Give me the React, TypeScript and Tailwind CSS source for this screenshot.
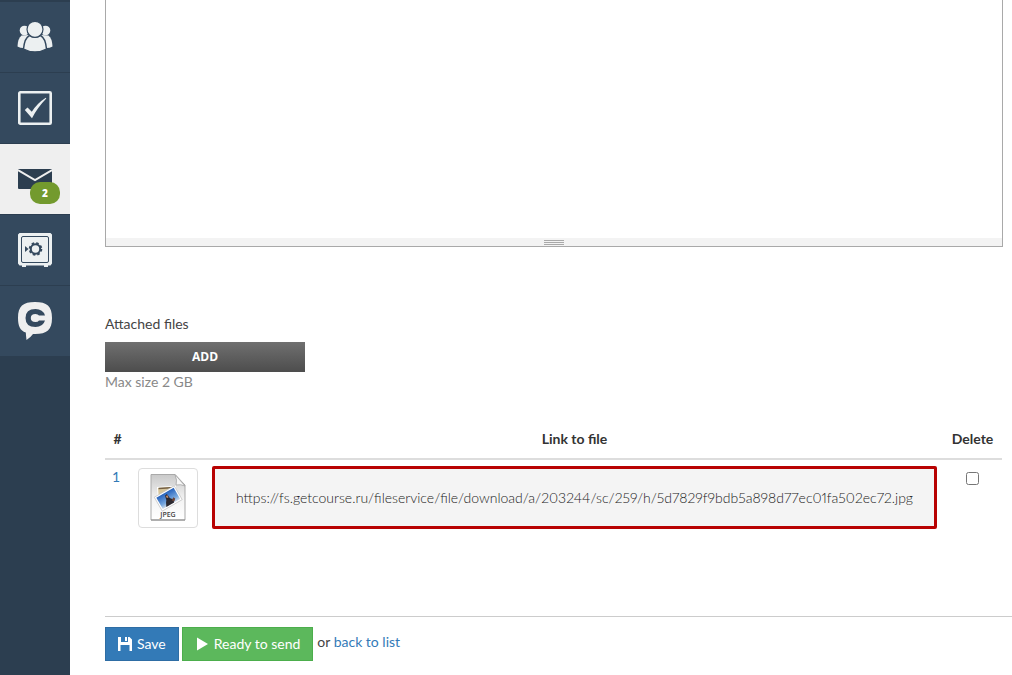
import type { ReactNode } from 'react';

interface NavItem {
  label: string;
  icon: ReactNode;
  active?: boolean;
  badge?: number;
}

interface AttachedFile {
  id: number;
  url: string;
}

const UsersIcon = () => (
  <svg width="36" height="32" viewBox="0 0 36 32" fill="#ecf0f1">
    <circle cx="7.5" cy="9.5" r="4.8" />
    <circle cx="28.5" cy="9.5" r="4.8" />
    <path d="M4.5 14.5 Q1 17 0.5 25.5 Q4 27.5 8 27 L12 14 Z" />
    <path d="M31.5 14.5 Q35 17 35.5 25.5 Q32 27.5 28 27 L24 14 Z" />
    <path
      d="M12.5 14.5 Q18 18 23.5 14.5 Q28.5 17 29.5 28 Q24 31 18 31 Q12 31 6.5 28 Q7.5 17 12.5 14.5 Z"
      stroke="#34495e"
      strokeWidth="1.4"
    />
    <circle cx="18" cy="8.3" r="8" stroke="#34495e" strokeWidth="1.2" />
  </svg>
);

const TaskIcon = () => (
  <svg width="34" height="34" viewBox="0 0 34 34">
    <rect x="1.3" y="1.3" width="31.4" height="31.4" rx="1" fill="none" stroke="#ecf0f1" strokeWidth="2.6" />
    <path d="M6.8 19 L9.5 16.6 L13.8 20.8 Q19.5 12 27.8 6.8 L28.3 7.6 Q20 16 14 27.2 Z" fill="#ecf0f1" />
  </svg>
);

const MailIcon = () => (
  <svg width="34" height="20" viewBox="0 0 34 20">
    <rect width="34" height="20" rx="1" fill="#2c3e50" />
    <path d="M0 1 L17 11 L34 1" fill="none" stroke="#efefef" strokeWidth="2" />
  </svg>
);

const SafeIcon = () => (
  <svg width="34" height="34" viewBox="0 0 34 34">
    <path d="M1.5 0 H32.5 L34 1.5 V30.5 L32.5 32.5 H30 V34 H26 V32.5 H8 V34 H4 V32.5 H1.5 L0 30.5 V1.5 Z" fill="#ecf0f1" />
    <rect x="3.5" y="3.5" width="27" height="26" rx="1.5" fill="none" stroke="#34495e" />
    <path d="M7 13 L10.5 16 L7 19 Z" fill="#34495e" />
    <circle cx="17.5" cy="16" r="4.7" fill="none" stroke="#34495e" strokeWidth="2" />
    <circle cx="17.5" cy="16" r="5.8" fill="none" stroke="#34495e" strokeWidth="2" strokeDasharray="2.55 2" />
  </svg>
);

const ChatIcon = () => (
  <svg width="34" height="38" viewBox="0 0 34 38">
    <path
      d="M17 0 C29 0 34 4 34 16 C34 28 29 32 17 32 L15 32 Q12.5 35.5 8.5 38 Q8 34 7.8 30.5 C2 28.5 0 24 0 16 C0 4 5 0 17 0 Z"
      fill="#efefef"
    />
    <path
      d="M27 13.5 H21 Q20 12 17.5 12 Q12.8 12 12.8 16 Q12.8 20 17.5 20 Q20 20 21 18.5 H27 Q25 25 17.5 25 Q7.5 25 7.5 16 Q7.5 7 17.5 7 Q25 7 27 13.5 Z"
      fill="#34495e"
    />
  </svg>
);

const JpegIcon = () => (
  <svg width="48" height="48" viewBox="0 0 48 48">
    <defs>
      <linearGradient id="page" x1="0" y1="0" x2="0" y2="1">
        <stop offset="0" stopColor="#c9c9c9" />
        <stop offset="0.55" stopColor="#f4f4f4" />
        <stop offset="1" stopColor="#fff" />
      </linearGradient>
      <linearGradient id="sky" x1="0" y1="0" x2="0" y2="1">
        <stop offset="0" stopColor="#2763bd" />
        <stop offset="0.7" stopColor="#79a9df" />
        <stop offset="1" stopColor="#d2dce8" />
      </linearGradient>
    </defs>
    <path d="M7 0.5 H31 L41 11 V46 H7 Z" fill="url(#page)" stroke="#a9a9a9" />
    <path d="M7 46 H41" stroke="#8a8a8a" />
    <path d="M31 0.5 Q33.5 6.5 32 11 Q37 10 41 12 Z" fill="#f7f7f7" stroke="#a5a5a5" strokeWidth="0.8" />
    <g transform="rotate(-4 22 20)">
      <rect x="14" y="13" width="18" height="13" fill="#d6c59b" stroke="#fff" />
      <path d="M15 14 H31" stroke="#745f43" strokeWidth="1.5" />
    </g>
    <g transform="rotate(-30 24 24)">
      <rect x="12.5" y="16.5" width="23" height="16" fill="#fff" stroke="#bbb" strokeWidth="0.6" />
      <rect x="14" y="18" width="20" height="13" fill="url(#sky)" />
      <path d="M18 31 L20 27 L21.5 25 L22.5 20.5 L25 20 L25.5 25 L28 28 L27 31 Z" fill="#2c2930" />
      <path d="M23 21 L25 21.5 L24.5 24 L23 23.5 Z" fill="#b98568" />
      <path d="M26 28 L29 26 L30 28 L28 30 Z" fill="#6e4436" />
    </g>
    <text x="24" y="43" textAnchor="middle" fontFamily="Open Sans, sans-serif" fontSize="7" fontWeight="600" fill="#444">
      JPEG
    </text>
  </svg>
);

const SaveIcon = () => (
  <svg width="14" height="14" viewBox="0 0 14 14" fill="#fff">
    <path d="M0 0 H3 V5 H10 V0 H11.5 L14 2.5 V14 H11.5 V8 H2.5 V14 H0 Z" />
    <rect x="7" y="0" width="2" height="4" />
  </svg>
);

const navItems: NavItem[] = [
  { label: 'Users', icon: <UsersIcon /> },
  { label: 'Tasks', icon: <TaskIcon /> },
  { label: 'Messages', icon: <MailIcon />, active: true, badge: 2 },
  { label: 'Sales', icon: <SafeIcon /> },
  { label: 'Chat', icon: <ChatIcon /> },
];

const files: AttachedFile[] = [
  {
    id: 1,
    url: 'https://fs.getcourse.ru/fileservice/file/download/a/203244/sc/259/h/5d7829f9bdb5a898d77ec01fa502ec72.jpg',
  },
];

function Sidebar() {
  return (
    <nav className="w-[70px] shrink-0 bg-[#2c3e50] pt-px">
      {navItems.map((item) => (
        <a
          key={item.label}
          href="#"
          aria-label={item.label}
          className={`relative flex h-[71px] items-center justify-center border-t border-[#2c3e50] ${
            item.active ? 'bg-[#efefef]' : 'bg-[#34495e]'
          }`}
        >
          {item.icon}
          {item.badge && (
            <span className="absolute right-[10px] bottom-[10px] flex h-[22px] w-[30px] items-center justify-center rounded-[10px] bg-[#739a2e] font-['Open_Sans',sans-serif] text-[10px] font-extrabold text-white">
              {item.badge}
            </span>
          )}
        </a>
      ))}
    </nav>
  );
}

function Editor() {
  return (
    <div className="border border-t-0 border-[#a9a9a9]">
      <textarea aria-label="Message" className="block h-[238px] w-full resize-none outline-none" />
      <div className="flex h-2 flex-col items-center gap-px bg-[#f3f3f3] pt-[2px]">
        <span className="h-px w-5 bg-[#a9a9a9]" />
        <span className="h-px w-5 bg-[#a9a9a9]" />
        <span className="h-px w-5 bg-[#a9a9a9]" />
      </div>
    </div>
  );
}

function FilesTable() {
  return (
    <div className="mt-[29px] pr-px">
      <table className="w-full">
        <thead>
          <tr className="border-b-2 border-[#ddd] align-top text-[#333]">
            <th className="w-[25px] px-2 pt-2 pb-[9px]">#</th>
            <th className="w-[76px] px-2" aria-label="Preview" />
            <th className="px-2 pt-2 pb-[9px]">Link to file</th>
            <th className="w-[59px] pt-2 pb-[9px]">Delete</th>
          </tr>
        </thead>
        <tbody>
          {files.map((file) => (
            <tr key={file.id} className="align-top">
              <td className="px-[7px] py-[7px] text-[#337ab7]">{file.id}</td>
              <td className="p-2">
                <div className="flex size-[60px] items-center justify-center rounded-[4px] border border-[#ddd] bg-white">
                  <JpegIcon />
                </div>
              </td>
              <td className="px-[6px] pt-[6px]">
                <div className="flex h-[63px] items-center justify-center rounded-[2px] border-3 border-[#b80202] bg-[#f4f4f4] font-light text-[#222] proportional-nums">
                  {file.url}
                </div>
              </td>
              <td className="pt-3 text-center">
                <input type="checkbox" aria-label="Delete file" className="mx-auto block size-[13px]" />
              </td>
            </tr>
          ))}
        </tbody>
      </table>
    </div>
  );
}

export default function App() {
  return (
    <div className="flex min-h-screen bg-white font-['Lato',sans-serif] text-sm leading-5 text-[#444]">
      <Sidebar />
      <main className="min-w-0 flex-1 pl-[35px]">
        <div className="pr-[9px]">
          <Editor />
          <p className="mt-[67px]">Attached files</p>
          <button
            type="button"
            className="mt-2 block h-[30px] w-[200px] bg-linear-to-b from-[#707070] to-[#4d4d4d] font-['Open_Sans',sans-serif] text-xs font-bold text-white"
          >
            ADD
          </button>
          <p className="text-[#888]">Max size 2 GB</p>
          <FilesTable />
        </div>
        <div className="mt-20 flex items-start border-t border-[#ccc] pt-[10px]">
          <button
            type="button"
            className="flex h-[34px] items-center gap-[5px] border border-[#2e6da4] bg-[#337ab7] px-3 pb-px text-white"
          >
            <SaveIcon />
            Save
          </button>
          <button
            type="button"
            className="ml-[3px] flex h-[34px] items-center gap-[5px] border border-[#4cae4c] bg-[#5cb85c] px-3 pb-px text-white"
          >
            <svg width="14" height="14" viewBox="0 0 14 14" fill="#fff">
              <path d="M2 0.5 L13 7 L2 13.5 Z" />
            </svg>
            Ready to send
          </button>
          <p className="mt-[5px] ml-1">
            or{' '}
            <a href="#" className="text-[#337ab7]">
              back to list
            </a>
          </p>
        </div>
      </main>
    </div>
  );
}
